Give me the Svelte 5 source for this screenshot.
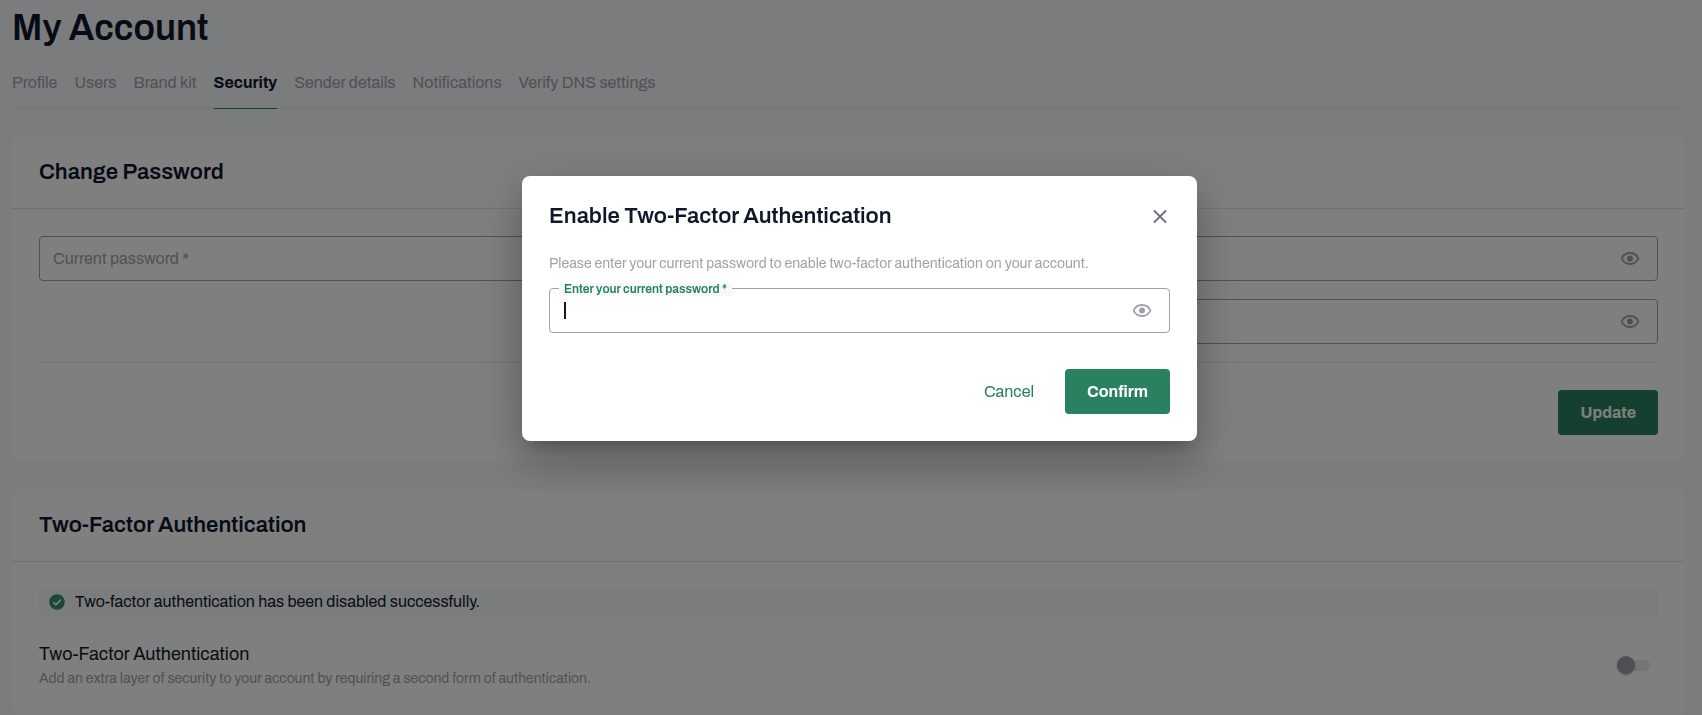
<script>
	const tabs = ['Profile', 'Users', 'Brand kit', 'Security', 'Sender details', 'Notifications', 'Verify DNS settings'];

	let activeTab = $state('Security');
	let modalOpen = $state(true);
	let twoFactor = $state(false);
	let password = $state('');
	let visible = $state({});

	function toggle(id) {
		visible[id] = !visible[id];
	}

	function select(event, tab) {
		event.preventDefault();
		activeTab = tab;
	}
</script>

{#snippet eye(id)}
	<button class='eye' type='button' aria-label='Toggle password visibility' onclick={() => toggle(id)}>
		<svg viewBox='0 0 20 20' width='20' height='20' aria-hidden='true'>
			<path d='M1.700 9.500C3.100 6 6.300 4 10 4s6.900 2 8.300 5.500C16.900 13 13.700 15 10 15s-6.900-2-8.300-5.500z' fill='none' stroke='currentColor' stroke-width='1.900' />
			<circle cx='10' cy='9.500' r='3' fill='currentColor' />
		</svg>
	</button>
{/snippet}

<main>
	<h1>My Account</h1>

	<nav>
		{#each tabs as tab}
			<a href='#{tab}' class:active={tab === activeTab} onclick={(e) => select(e, tab)}>{tab}</a>
		{/each}
	</nav>

	<section class='card'>
		<h2>Change Password</h2>
		<form class='card-body'>
			<div class='fields'>
				<div class='field'>
					<input type={visible.current ? 'text' : 'password'} placeholder='Current password *' aria-label='Current password' />
				</div>
				<div class='column'>
					<div class='field'>
						<input type={visible.fresh ? 'text' : 'password'} aria-label='New password' />
						{@render eye('fresh')}
					</div>
					<div class='field'>
						<input type={visible.repeat ? 'text' : 'password'} aria-label='Confirm new password' />
						{@render eye('repeat')}
					</div>
				</div>
			</div>
			<div class='update'>
				<button class='primary' type='button'>Update</button>
			</div>
		</form>
	</section>

	<section class='card'>
		<h2>Two-Factor Authentication</h2>
		<div class='card-body'>
			<div class='notice' role='status'>
				<svg viewBox='0 0 16 16' width='16' height='16' aria-hidden='true'>
					<circle cx='8' cy='8' r='7.800' fill='#35906c' />
					<path d='M4.300 8.300l2.600 2.600 4.900-5.300' fill='none' stroke='#fff' stroke-width='1.600' />
				</svg>
				<span>Two-factor authentication has been disabled successfully.</span>
			</div>
			<div class='setting'>
				<label for='two-factor'>
					<strong>Two-Factor Authentication</strong>
					<small>Add an extra layer of security to your account by requiring a second form of authentication.</small>
				</label>
				<input id='two-factor' class='switch' type='checkbox' role='switch' bind:checked={twoFactor} />
			</div>
		</div>
	</section>
</main>

{#if modalOpen}
	<div class='overlay'>
		<div class='modal' role='dialog' aria-modal='true' aria-labelledby='modal-title'>
			<header>
				<h2 id='modal-title'>Enable Two-Factor Authentication</h2>
				<button class='close' type='button' aria-label='Close' onclick={() => modalOpen = false}>
					<svg viewBox='0 0 20 20' width='20' height='20' aria-hidden='true'>
						<path d='M4 3.500l12 12M16 3.500L4 15.500' fill='none' stroke='currentColor' stroke-width='1.800' />
					</svg>
				</button>
			</header>
			<p>Please enter your current password to enable two-factor authentication on your account.</p>
			<div class='field'>
				<label for='password'>Enter your current password *</label>
				<input id='password' type={visible.modal ? 'text' : 'password'} bind:value={password} />
				{#if !password}<span class='caret'></span>{/if}
				{@render eye('modal')}
			</div>
			<footer>
				<button class='link' type='button' onclick={() => modalOpen = false}>Cancel</button>
				<button class='primary' type='button'>Confirm</button>
			</footer>
		</div>
	</div>
{/if}

<style>
	:global(body) {
		background: #f6f8fc;
		color: #0f172a;
		font-family: Archivo, 'Liberation Sans', Arial, sans-serif;
		font-size: 16px;
	}

	main {
		padding: 8px 17px 0 12px;
	}

	h1, h2, p {
		margin: 0;
	}

	h1 {
		font-size: 36px;
		line-height: 40px;
		font-weight: 600;
	}

	h2 {
		font-size: 22px;
		line-height: 27px;
		font-weight: 600;
	}

	nav {
		display: flex;
		gap: 17px;
		margin: 22px 0 27px;
		border-bottom: 1px solid #e6e8ee;
	}

	nav a {
		padding: 3px 0 15px;
		margin-bottom: -1px;
		border-bottom: 1px solid transparent;
		line-height: 20px;
		color: #a0a2aa;
		text-decoration: none;
	}

	nav a.active {
		color: #0f172a;
		font-weight: 700;
		border-color: #26805d;
	}

	.card {
		margin-bottom: 27px;
		background: #fff;
		border-radius: 9px;
	}

	.card:last-child {
		margin-bottom: 0;
	}

	.card h2 {
		padding: 23px 27px 22px;
		border-bottom: 1px solid #e2e3e9;
	}

	.card-body {
		padding: 27px;
	}

	.fields {
		display: grid;
		grid-template-columns: 1fr 1fr;
		gap: 18px;
		padding-bottom: 18px;
		border-bottom: 1px solid #e6e8ee;
	}

	.column {
		display: grid;
		gap: 18px;
	}

	.field {
		position: relative;
		display: flex;
		align-items: center;
		box-sizing: border-box;
		height: 45px;
		border: 1px solid #9fa1ab;
		border-radius: 4px;
	}

	.field input {
		flex: 1;
		min-width: 0;
		height: 100%;
		box-sizing: border-box;
		padding: 0 13px;
		border: 0;
		outline: 0;
		background: none;
		font: inherit;
		color: inherit;
	}

	.field input::placeholder {
		color: #a0a2aa;
		opacity: 1;
	}

	.field label {
		position: absolute;
		top: -6px;
		left: 9px;
		padding: 0 5px;
		border-radius: 2px;
		background: #f6f8fc;
		color: #26805d;
		font-size: 12px;
		line-height: 13px;
		font-weight: 600;
	}

	.caret {
		position: absolute;
		left: 14px;
		width: 2px;
		height: 17px;
		background: #0f172a;
	}

	button {
		border: 0;
		background: none;
		font: inherit;
		cursor: pointer;
	}

	.eye {
		display: flex;
		margin-right: 17px;
		padding: 0;
		color: #9fa1ab;
	}

	.primary {
		height: 45px;
		padding: 0 22px;
		border-radius: 4px;
		background: #2a815f;
		color: #fff;
		font-weight: 700;
	}

	.update {
		display: flex;
		justify-content: flex-end;
		padding-top: 27px;
	}

	.notice {
		display: flex;
		align-items: center;
		gap: 10px;
		box-sizing: border-box;
		height: 27px;
		padding: 0 10px 2px;
		border-radius: 4px;
		background: #f6f8fc;
	}

	.setting {
		display: flex;
		align-items: center;
		justify-content: space-between;
		margin-top: 27px;
	}

	.setting label {
		display: flex;
		flex-direction: column;
	}

	.setting strong {
		font-size: 18px;
		line-height: 22px;
		font-weight: 400;
	}

	.setting small {
		padding-top: 4px;
		font-size: 14px;
		line-height: 20px;
		color: #a0a2aa;
	}

	.switch {
		appearance: none;
		display: flex;
		align-items: center;
		width: 32px;
		height: 11px;
		margin: 0 8px 2px 0;
		border-radius: 6px;
		background: #ebebee;
	}

	.switch::before {
		content: '';
		width: 18px;
		height: 18px;
		margin-left: -1px;
		border-radius: 50%;
		background: #9fa1ab;
		box-shadow: 0 1px 2px rgba(0, 0, 0, 0.3);
	}

	.switch:checked::before {
		margin-left: 15px;
		background: #26805d;
	}

	.overlay {
		position: fixed;
		inset: 0;
		display: flex;
		align-items: flex-start;
		justify-content: center;
		padding: 176px 0 0 17px;
		background: rgba(0, 0, 0, 0.5);
	}

	.modal {
		box-sizing: border-box;
		width: 100%;
		max-width: 675px;
		padding: 27px;
		border-radius: 8px;
		background: #fff;
		box-shadow: 0 11px 15px -7px rgba(0, 0, 0, 0.2), 0 24px 38px 3px rgba(0, 0, 0, 0.14), 0 9px 46px 8px rgba(0, 0, 0, 0.12);
	}

	.modal header {
		display: flex;
		align-items: center;
		justify-content: space-between;
	}

	.close {
		display: flex;
		padding: 0;
		color: #6b6f7b;
	}

	.modal p {
		margin: 23px 0 14px;
		font-size: 14px;
		line-height: 21px;
		color: #a0a2aa;
	}

	.modal footer {
		display: flex;
		align-items: center;
		justify-content: flex-end;
		gap: 9px;
		margin-top: 36px;
	}

	.link {
		height: 45px;
		padding: 0 22px;
		color: #26805d;
	}
</style>
